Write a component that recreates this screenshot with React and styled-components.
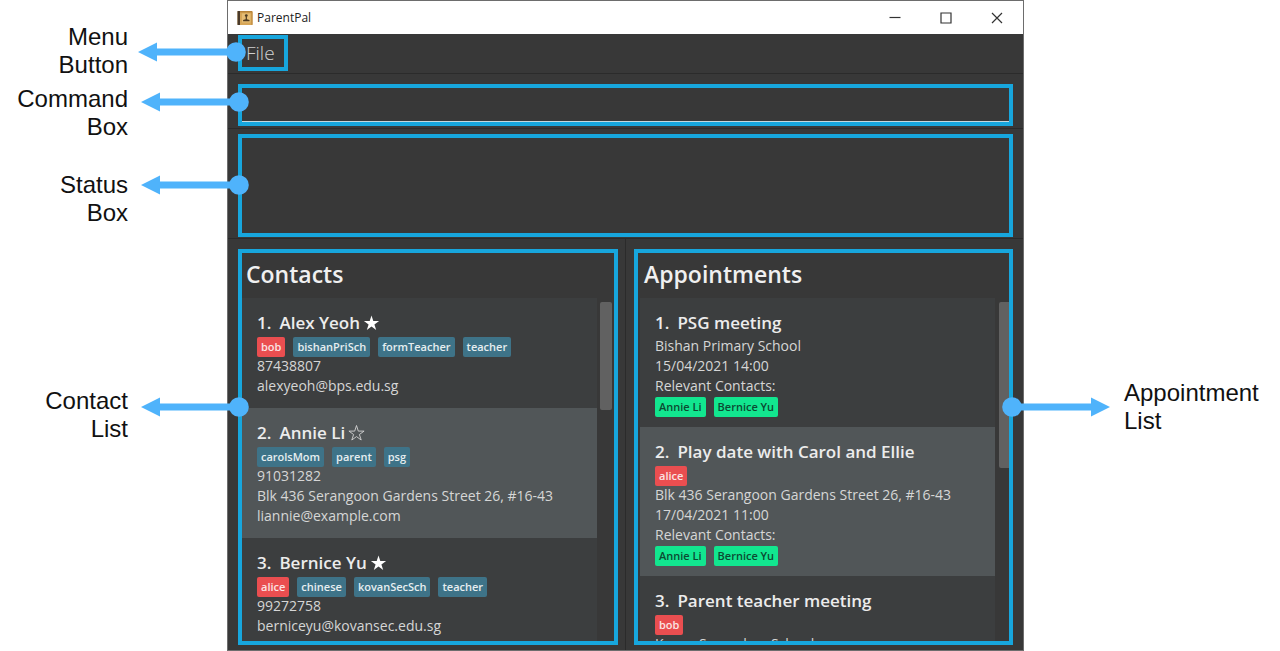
import React from "react";
import styled, { createGlobalStyle } from "styled-components";

const GlobalStyle = createGlobalStyle`
  * { box-sizing: border-box; }
  body { margin: 0; background: #fff; }
  h2, h3, p, ol { margin: 0; padding: 0; }
`;

const uiFont = `"Open Sans", "Noto Sans", sans-serif`;
const accent = "#4fb3fb";
const outline = "#17a6dd";

const Page = styled.div`
  display: grid;
  grid-template-columns: 227px minmax(0, 1fr) 256px;
  height: 100vh;
  overflow: hidden;
`;

/* ---------- callouts beside the window ---------- */

const Gutter = styled.aside`
  position: relative;
  z-index: 2;
  min-width: 0;
  pointer-events: none;
`;

const Callout = styled.div`
  display: flex;
  align-items: flex-start;
  gap: ${(p) => p.$gap || 13}px;
  margin-top: ${(p) => p.$space}px;
  margin-left: ${(p) => (p.$right ? -22 : 0)}px;

  svg {
    flex: none;
    margin-top: ${(p) => p.$drop - 10}px;
  }
`;

const CalloutLabel = styled.p`
  flex: none;
  width: ${(p) => (p.$right ? "auto" : "128px")};
  font: 24px/28px "Liberation Sans", Arial, sans-serif;
  color: #111;
  text-align: ${(p) => (p.$right ? "left" : "right")};
  white-space: pre-line;
`;

const LeftArrow = () => (
  <svg width="108" height="20" viewBox="0 0 108 20" fill={accent} aria-hidden="true">
    <path d="M0 10 19 0.5V6.5H98v7H19v6z" />
    <circle cx="98" cy="10" r="9.8" />
  </svg>
);

const RightArrow = () => (
  <svg width="108" height="20" viewBox="0 0 108 20" fill={accent} aria-hidden="true">
    <path d="M108 10 89 0.5V6.5H10v7h79v6z" />
    <circle cx="10" cy="10" r="9.8" />
  </svg>
);

/* ---------- application window ---------- */

const Window = styled.main`
  display: flex;
  flex-direction: column;
  min-width: 0;
  min-height: 0;
  border: 1px solid #6d6d6d;
  background: #383838;
  color: #e2e2e2;
  font-family: ${uiFont};
`;

const TitleBar = styled.header`
  display: flex;
  align-items: center;
  flex: none;
  height: 33px;
  padding-left: 9px;
  padding-right: 1px;
  background: #fff;
  color: #222;
`;

const AppName = styled.span`
  flex: 1;
  margin-left: 4px;
  font-size: 12px;
  line-height: 16px;
`;

const WindowButton = styled.button`
  display: flex;
  align-items: center;
  justify-content: center;
  width: 51px;
  height: 32px;
  padding: 0;
  border: 0;
  background: none;
  color: #333;
`;

const MenuBar = styled.nav`
  flex: none;
  padding: 1px 10px 2px;
  border-bottom: 1px solid #2b2b2b;
`;

const MenuButton = styled.button`
  display: block;
  width: 50px;
  height: 36px;
  padding: 0 0 0 4px;
  border: 4px solid ${outline};
  background: none;
  color: #d0d0d0;
  font: 300 19px/28px ${uiFont};
  text-align: left;
`;

const CommandPane = styled.form`
  flex: none;
  padding: 10px 10px 2px;
  border-bottom: 1px solid #2b2b2b;
`;

const StatusPane = styled.section`
  flex: none;
  padding: 5px 10px 1px;
  border-bottom: 1px solid #2b2b2b;
`;

const Outlined = styled.div`
  height: ${(p) => p.$height};
  border: 4px solid ${outline};
`;

const CommandInput = styled.input`
  display: block;
  width: 100%;
  height: 100%;
  padding: 0 6px;
  border: 0;
  border-bottom: 1px solid #c4d9e0;
  outline: none;
  background: none;
  color: #fff;
  font: 18px/24px ${uiFont};
`;

const Panels = styled.div`
  display: grid;
  grid-template-columns: minmax(0, 1fr) 1px minmax(0, 1fr);
  flex: 1;
  min-height: 0;
`;

const Divider = styled.div`
  background: #2b2b2b;
`;

const Panel = styled.section`
  min-height: 0;
  padding: ${(p) => (p.$end ? "10px 10px 5px 8px" : "10px 7px 5px 10px")};
`;

const PanelBody = styled(Outlined)`
  display: flex;
  flex-direction: column;
  padding-left: ${(p) => (p.$end ? 2 : 0)}px;
`;

const PanelTitle = styled.h2`
  flex: none;
  height: 45px;
  padding-left: 4px;
  font-size: 23px;
  line-height: 42px;
  font-weight: 600;
  color: #f0f0f0;
`;

const Scroller = styled.div`
  display: grid;
  grid-template-columns: minmax(0, 1fr) ${(p) => (p.$end ? 14 : 17)}px;
  flex: 1;
  min-height: 0;
  overflow: hidden;
`;

const List = styled.ol`
  min-height: 0;
  overflow: hidden;
  list-style: none;
  background: #3c3e3f;
`;

const Track = styled.div`
  min-height: 0;
  padding: 4px ${(p) => (p.$end ? "0 0 4px" : "2px 0 3px")};
`;

const Thumb = styled.div`
  height: ${(p) => p.$size}%;
  border-radius: ${(p) => (p.$end ? "2px 0 0 2px" : "2px")};
  background: #616161;
`;

const Card = styled.li`
  padding: 11px 15px ${(p) => (p.$compact ? 10 : 11)}px;
  background: #3c3e3f;

  &:nth-child(even) { background: #515658; }
`;

const CardTitle = styled.h3`
  display: flex;
  align-items: center;
  height: 28px;
  font-size: 17px;
  line-height: 28px;
  font-weight: 600;
  white-space: nowrap;
  color: #ececec;

  svg { margin-left: 3px; }
`;

const Index = styled.span`
  margin-right: 8px;
`;

const Line = styled.p`
  height: 20px;
  font-size: 14px;
  line-height: 18px;
  white-space: nowrap;
  color: #d6d6d6;
`;

const Tags = styled.div`
  display: flex;
  gap: 8px;
  height: 20px;
`;

const tagColors = {
  child: ["#ea4e50", "#fbe3e3"],
  plain: ["#3e7388", "#e6eef0"],
  contact: ["#12e68f", "#0c4a32"],
};

const Tag = styled.span`
  height: 20px;
  padding: 0 4px;
  border-radius: 2px;
  background: ${(p) => tagColors[p.$kind][0]};
  color: ${(p) => tagColors[p.$kind][1]};
  font-size: 11px;
  line-height: 20px;
  font-weight: 600;
`;

const Star = ({ filled }) => (
  <svg width="17" height="16" viewBox="0 0 16 16" role="img" aria-label={filled ? "Favourite" : "Not favourite"}>
    <path
      d="M8 0.5 9.8 6.1H15.6L10.9 9.5 12.7 15 8 11.6 3.300 15 5.1 9.5 0.4 6.1H6.2z"
      fill={filled ? "#fff" : "none"}
      stroke={filled ? "none" : "#d4d4d4"}
      strokeWidth="0.9"
    />
  </svg>
);

const BookIcon = () => (
  <svg width="16" height="16" viewBox="0 0 16 16" aria-hidden="true">
    <rect x="0.5" y="1" width="15" height="14" rx="1" fill="#d7a657" />
    <path d="M3 1h12v1.500H3zM14.500 1.500h1V15h-1z" fill="#b98438" />
    <rect x="0.5" y="1" width="2.500" height="14" fill="#4a3a2a" />
    <rect x="5" y="3.500" width="8.500" height="9" fill="#e6bd74" />
    <circle cx="9.300" cy="5.600" r="1.400" fill="#4d3a1f" />
    <path d="M8.700 6.500h1.200v2.800l2.600 0.700v1.200H6.100V10l2.600-0.700z" fill="#4d3a1f" />
  </svg>
);

const contacts = [
  {
    name: "Alex Yeoh",
    starred: true,
    tags: [["bob", "child"], ["bishanPriSch", "plain"], ["formTeacher", "plain"], ["teacher", "plain"]],
    lines: ["87438807", "alexyeoh@bps.edu.sg"],
  },
  {
    name: "Annie Li",
    starred: false,
    tags: [["carolsMom", "plain"], ["parent", "plain"], ["psg", "plain"]],
    lines: ["91031282", "Blk 436 Serangoon Gardens Street 26, #16-43", "liannie@example.com"],
  },
  {
    name: "Bernice Yu",
    starred: true,
    tags: [["alice", "child"], ["chinese", "plain"], ["kovanSecSch", "plain"], ["teacher", "plain"]],
    lines: ["99272758", "berniceyu@kovansec.edu.sg"],
  },
];

const appointments = [
  {
    name: "PSG meeting",
    tags: [],
    lines: ["Bishan Primary School", "15/04/2021 14:00", "Relevant Contacts:"],
    people: ["Annie Li", "Bernice Yu"],
  },
  {
    name: "Play date with Carol and Ellie",
    tags: [["alice", "child"]],
    lines: ["Blk 436 Serangoon Gardens Street 26, #16-43", "17/04/2021 11:00", "Relevant Contacts:"],
    people: ["Annie Li", "Bernice Yu"],
  },
  {
    name: "Parent teacher meeting",
    tags: [["bob", "child"]],
    lines: ["Kovan Secondary School"],
    people: [],
  },
];

const TagRow = ({ tags }) =>
  tags.length > 0 && (
    <Tags>
      {tags.map(([text, kind]) => (
        <Tag key={text} $kind={kind}>{text}</Tag>
      ))}
    </Tags>
  );

const Entry = ({ number, item, compact }) => (
  <Card $compact={compact}>
    <CardTitle>
      <Index>{number}.</Index>
      <span>{item.name}</span>
      {item.starred !== undefined && <Star filled={item.starred} />}
    </CardTitle>
    <TagRow tags={item.tags} />
    {item.lines.map((line) => <Line key={line}>{line}</Line>)}
    <TagRow tags={(item.people || []).map((name) => [name, "contact"])} />
  </Card>
);

const ListPanel = ({ title, items, thumb, end }) => (
  <Panel $end={end}>
    <PanelBody $height="100%" $end={end}>
      <PanelTitle>{title}</PanelTitle>
      <Scroller $end={end}>
        <List>
          {items.map((item, i) => <Entry key={item.name} number={i + 1} item={item} compact={end} />)}
        </List>
        <Track $end={end}><Thumb $size={thumb} $end={end} /></Track>
      </Scroller>
    </PanelBody>
  </Panel>
);

const LeftCallout = ({ text, ...layout }) => (
  <Callout {...layout}>
    <CalloutLabel>{text}</CalloutLabel>
    <LeftArrow />
  </Callout>
);

export default function App() {
  return (
    <>
      <GlobalStyle />
      <Page>
        <Gutter>
          <LeftCallout text={"Menu\nButton"} $space={23} $drop={29} $gap={10} />
          <LeftCallout text={"Command\nBox"} $space={6} $drop={17} />
          <LeftCallout text={"Status\nBox"} $space={30} $drop={14} />
          <LeftCallout text={"Contact\nList"} $space={160} $drop={20} />
        </Gutter>

        <Window>
          <TitleBar>
            <BookIcon />
            <AppName>ParentPal</AppName>
            <WindowButton type="button" aria-label="Minimize">
              <svg width="12" height="12" stroke="currentColor" strokeWidth="1.200"><path d="M0.500 5.500H11.500" /></svg>
            </WindowButton>
            <WindowButton type="button" aria-label="Maximize">
              <svg width="12" height="12" fill="none" stroke="currentColor" strokeWidth="1.200"><path d="M1 1H11V11H1z" /></svg>
            </WindowButton>
            <WindowButton type="button" aria-label="Close">
              <svg width="12" height="12" stroke="currentColor" strokeWidth="1.200"><path d="M1 1 11 11M11 1 1 11" /></svg>
            </WindowButton>
          </TitleBar>

          <MenuBar>
            <MenuButton type="button">File</MenuButton>
          </MenuBar>

          <CommandPane onSubmit={(e) => e.preventDefault()}>
            <Outlined $height="42px">
              <CommandInput type="text" aria-label="Command" />
            </Outlined>
          </CommandPane>

          <StatusPane aria-label="Status">
            <Outlined $height="103px" role="status" />
          </StatusPane>

          <Panels>
            <ListPanel title="Contacts" items={contacts} thumb={32} />
            <Divider />
            <ListPanel title="Appointments" items={appointments} thumb={49} end />
          </Panels>
        </Window>

        <Gutter>
          <Callout $right $space={379} $drop={28} $gap={14}>
            <RightArrow />
            <CalloutLabel $right>{"Appointment\nList"}</CalloutLabel>
          </Callout>
        </Gutter>
      </Page>
    </>
  );
}
